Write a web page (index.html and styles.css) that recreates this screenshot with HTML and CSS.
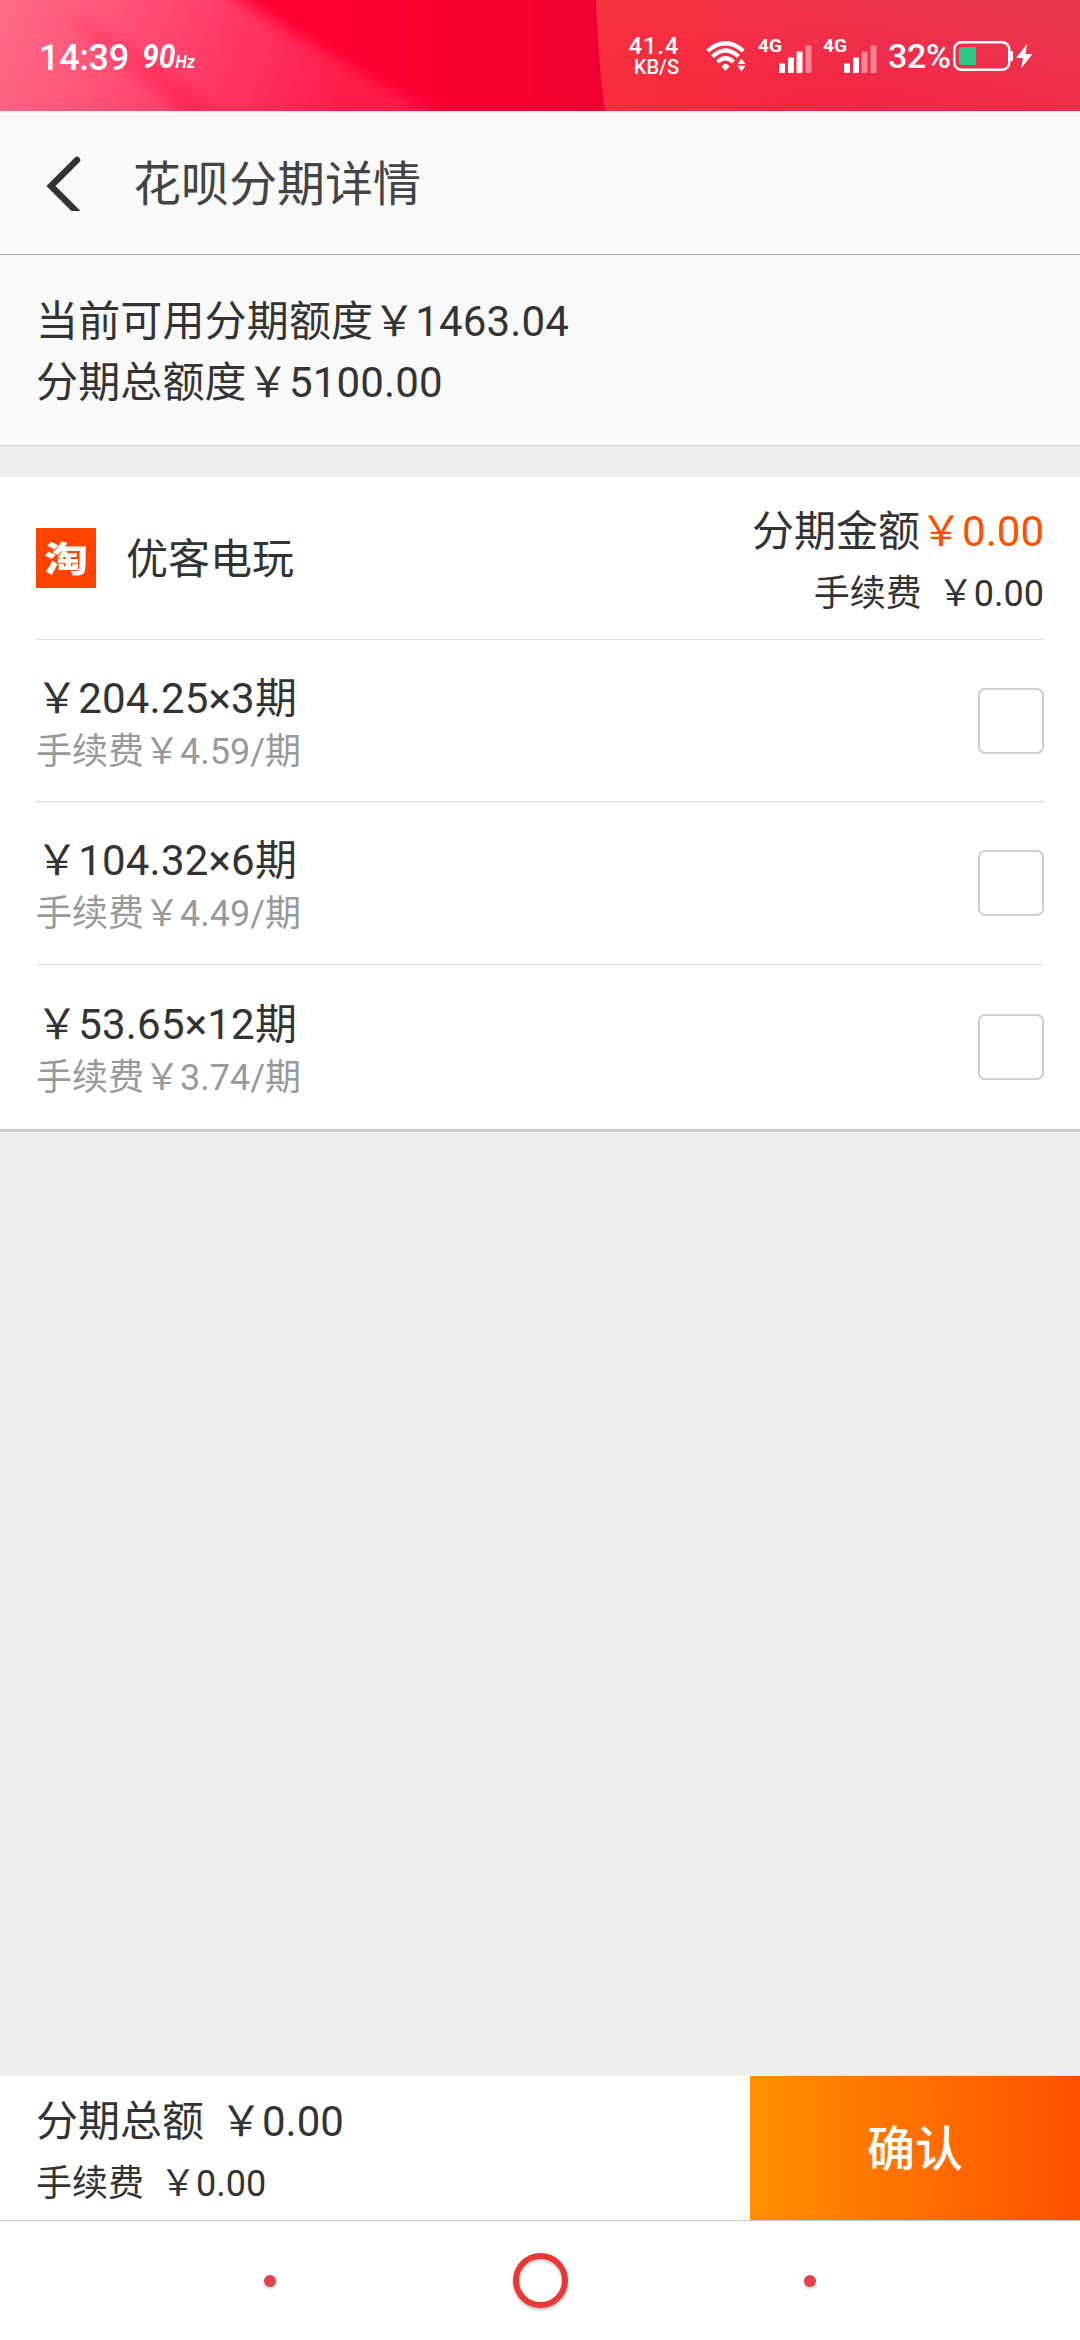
FILE: index.html
```html
<!DOCTYPE html>
<html lang="zh-CN">
    <head>
        <meta charset="UTF-8">
        <meta name="viewport" content="width=device-width, initial-scale=1.0">
        <title>花呗分期详情</title>
        <link rel="stylesheet" href="styles.css">
    </head>
    <body>
        <div class="status-bar">
            <svg class="status-bg" viewBox="0 0 1080 111" preserveAspectRatio="none">
                <defs>
                    <linearGradient id="red" x1="0" x2="1" y1="0" y2="0">
                        <stop offset="0.3" stop-color="#ff0033"/>
                        <stop offset="0.55" stop-color="#f00030"/>
                    </linearGradient>
                    <linearGradient id="pink" gradientUnits="userSpaceOnUse" x1="0" y1="0" x2="350" y2="130">
                        <stop offset="0" stop-color="#ff6c88"/>
                        <stop offset="0.3" stop-color="#ff5478"/>
                        <stop offset="0.65" stop-color="#ff3560"/>
                        <stop offset="1" stop-color="#ff1a48"/>
                    </linearGradient>
                    <linearGradient id="panel" gradientUnits="userSpaceOnUse" x1="900" y1="-30" x2="860" y2="130">
                        <stop offset="0" stop-color="#ea3850"/>
                        <stop offset="1" stop-color="#f42143"/>
                    </linearGradient>
                    <linearGradient id="shine" x1="0" x2="1" y1="0" y2="0">
                        <stop offset="0" stop-color="#ff4030" stop-opacity="0.4"/>
                        <stop offset="0.6" stop-color="#ff4030" stop-opacity="0"/>
                    </linearGradient>
                    <filter id="soft" x="-20%" y="-50%" width="140%" height="200%">
                        <feGaussianBlur stdDeviation="8"/>
                    </filter>
                </defs>
                <rect width="1080" height="111" fill="url(#red)"/>
                <path d="M-60-60H150L240 0 320 50 425 111 500 170H-60Z" fill="url(#pink)" filter="url(#soft)"/>
                <path d="M60 14Q130 45 222 116H190Q130 60 60 14Z" fill="#ff0f42" opacity="0.55" filter="url(#soft)"/>
                <path d="M596 0Q598 60 605 111H1080V0Z" fill="url(#panel)"/>
                <path d="M596 0Q598 60 605 111H1080V0Z" fill="url(#shine)"/>
            </svg>
            <span class="time">14:39</span>
            <span class="rate">90<small>Hz</small></span>
            <div class="speed">
                <span class="speed-num">41.4</span>
                <span class="speed-unit">KB/S</span>
            </div>
            <svg class="wifi" width="40" height="32" viewBox="0 0 40 32">
                <g fill="none" stroke="#fff" stroke-width="4.2">
                    <path d="M1.7 11Q19.5-4.6 37.3 11"/>
                    <path d="M6.5 16.5Q19.5 4.5 32.5 16.5"/>
                    <path d="M11.5 22Q19.5 14.5 27.5 22"/>
                </g>
                <path d="M19.5 31L15.5 26.5Q19.5 21 23.5 26.5Z" fill="#fff"/>
                <path d="M31.5 24L35.5 18.5 39.5 24ZM31.5 25.7H39.5L35.5 31.5Z" fill="#fff"/>
            </svg>
            <div class="signal">
                <span>4G</span>
                <svg width="33" height="28" viewBox="0 0 33 28" fill="#fff">
                    <rect x="0" y="18.500" width="6" height="9.500" rx="1"/>
                    <rect x="9" y="12.500" width="6" height="15.500" rx="1"/>
                    <rect x="17.500" y="6.500" width="6" height="21.500" rx="1"/>
                    <rect x="26.500" y="0.500" width="6" height="27.500" rx="1" opacity="0.42"/>
                </svg>
            </div>
            <div class="signal">
                <span>4G</span>
                <svg width="33" height="28" viewBox="0 0 33 28" fill="#fff">
                    <rect x="0" y="18.500" width="6" height="9.500" rx="1"/>
                    <rect x="9" y="12.500" width="6" height="15.500" rx="1"/>
                    <rect x="17.500" y="6.500" width="6" height="21.500" rx="1" opacity="0.42"/>
                    <rect x="26.500" y="0.500" width="6" height="27.500" rx="1" opacity="0.42"/>
                </svg>
            </div>
            <span class="percent">32%</span>
            <svg class="battery" width="80" height="30" viewBox="0 0 80 30">
                <rect x="1.250" y="1.250" width="55" height="27.500" rx="7" fill="none" stroke="#fff" stroke-width="2.500"/>
                <path d="M57 10H58.500Q60 10 60 11.500V18.500Q60 20 58.500 20H57Z" fill="#fff"/>
                <path d="M9 6H23V24H9Q6 24 6 21V9Q6 6 9 6Z" fill="#2bc786"/>
                <path d="M74 3L63 17H70L68 27.500 79.500 13H72.500Z" fill="#fff"/>
            </svg>
        </div>

        <div class="header">
            <svg class="back" width="36" height="56" viewBox="0 0 36 56">
                <path d="M31 5L5 31 31 57" fill="none" stroke="#333" stroke-width="6.500" stroke-linecap="round"/>
            </svg>
            <h1>花呗分期详情</h1>
        </div>

        <div class="quota">
            <p>当前可用分期额度￥1463.04</p>
            <p>分期总额度￥5100.00</p>
        </div>

        <div class="card">
            <div class="shop">
                <div class="logo"><span>淘</span></div>
                <div class="shop-name">优客电玩</div>
                <div class="shop-total">
                    <p class="big">分期金额<span class="price">￥0.00</span></p>
                    <p class="small">手续费<span class="value">￥0.00</span></p>
                </div>
            </div>
            <label class="plan">
                <div>
                    <p class="big">￥204.25×3期</p>
                    <p class="small">手续费￥4.59/期</p>
                </div>
                <input type="checkbox" name="plan">
            </label>
            <label class="plan">
                <div>
                    <p class="big">￥104.32×6期</p>
                    <p class="small">手续费￥4.49/期</p>
                </div>
                <input type="checkbox" name="plan">
            </label>
            <label class="plan">
                <div>
                    <p class="big">￥53.65×12期</p>
                    <p class="small">手续费￥3.74/期</p>
                </div>
                <input type="checkbox" name="plan">
            </label>
        </div>

        <div class="footer">
            <div class="footer-total">
                <p class="big">分期总额<span class="value">￥0.00</span></p>
                <p class="small">手续费<span class="value">￥0.00</span></p>
            </div>
            <button type="button" class="confirm">确认</button>
        </div>

        <div class="nav-bar">
            <i class="dot"></i>
            <i class="ring"></i>
            <i class="dot"></i>
        </div>
    </body>
</html>
```
FILE: styles.css
```css
* {
    box-sizing: border-box;
}

body {
    font-family: Roboto, "Noto Sans CJK SC", sans-serif;
    background-color: #eee;
    color: #333;
    margin: 0;
    height: 2340px;
    display: flex;
    flex-direction: column;
}

p, h1 {
    margin: 0;
    font-weight: 400;
    white-space: nowrap;
}

.big {
    font-size: 42px;
}

.small {
    font-size: 36px;
}

.value {
    margin-left: 16px;
}

/* status bar */
.status-bar {
    position: relative;
    height: 111px;
    flex: none;
    display: flex;
    align-items: flex-start;
    color: #fff;
    font-weight: 500;
    padding-left: 39px;
}

.status-bar > * {
    position: relative;
    flex: none;
}

.status-bar .status-bg {
    position: absolute;
    left: 0;
    top: 0;
    width: 100%;
    height: 100%;
}

.time {
    font-size: 36px;
    line-height: 40px;
    letter-spacing: -0.3px;
    margin-top: 38px;
    width: 103px;
}

.rate {
    font-size: 34px;
    line-height: 40px;
    font-weight: 700;
    font-style: italic;
    margin-top: 36px;
    width: 485px;
    transform: scaleX(0.88);
    transform-origin: left;
}

.rate small {
    font-size: 19px;
}

.speed {
    width: 52px;
    margin-top: 34px;
    display: flex;
    flex-direction: column;
    align-items: flex-end;
}

.speed-num {
    font-size: 24px;
    line-height: 24px;
    letter-spacing: 0.7px;
}

.speed-unit {
    font-size: 20px;
    line-height: 18px;
}

.wifi {
    margin: 40px 0 0 27px;
}

.signal {
    display: flex;
    width: 65px;
    margin-top: 36px;
}

.wifi + .signal {
    margin-left: 12px;
}

.signal span {
    font-size: 19px;
    line-height: 20px;
    font-weight: 700;
    width: 21px;
}

.signal svg {
    margin-top: 9px;
    flex: none;
}

.percent {
    font-size: 34px;
    line-height: 40px;
    letter-spacing: -0.3px;
    margin-top: 36px;
    width: 65px;
}

.battery {
    margin-top: 41px;
}

/* title */
.header {
    height: 144px;
    flex: none;
    display: flex;
    align-items: flex-start;
    background-color: #fafafa;
    border-bottom: 1px solid #aaa;
    padding-left: 46px;
}

.back {
    margin-top: 44px;
}

h1 {
    font-size: 48px;
    line-height: 60px;
    color: #444;
    margin: 44px 0 0 51px;
}

.quota {
    height: 191px;
    flex: none;
    background-color: #f9f9f9;
    border-bottom: 1px solid #d5d5d5;
    padding: 36px;
    font-size: 42px;
    line-height: 61px;
    letter-spacing: 0.15px;
}

/* shop and plans */
.card {
    flex: none;
    margin-top: 31px;
    padding: 0 36px;
    background-color: #fff;
    border-bottom: 3px solid #ccc;
}

.shop {
    height: 162px;
    display: flex;
    align-items: center;
}

.logo {
    width: 60px;
    height: 60px;
    background-color: #ff4400;
    color: #fff;
    font-family: "Noto Sans CJK SC", sans-serif;
    font-size: 44px;
    font-weight: 900;
    line-height: 58px;
    text-align: center;
}

.logo span {
    display: block;
    transform: scaleY(0.8);
}

.shop-name {
    font-size: 42px;
    margin-left: 30px;
    padding-bottom: 5px;
    flex: 1;
}

.shop-total {
    text-align: right;
    line-height: 62px;
    padding-top: 10px;
}

.price {
    color: #ff5000;
}

.plan {
    height: 163px;
    display: flex;
    align-items: center;
    justify-content: space-between;
    border-top: 1px solid #ddd;
}

.shop + .plan {
    height: 162px;
}

.plan:last-child {
    height: 165px;
}

.plan div {
    padding-top: 10px;
}

.plan .big {
    line-height: 52px;
    letter-spacing: 0.2px;
}

.plan .small {
    line-height: 54px;
    color: #999;
}

.plan input {
    appearance: none;
    width: 66px;
    height: 66px;
    margin: 0;
    border: 2px solid #ccced2;
    border-radius: 7px;
    background-color: #fff;
}

/* bottom */
.footer {
    height: 144px;
    flex: none;
    margin-top: auto;
    display: flex;
    justify-content: space-between;
    background-color: #fff;
}

.footer-total {
    padding: 15px 36px 0;
    line-height: 62px;
}

.confirm {
    width: 330px;
    border: none;
    padding: 0 0 6px;
    background: linear-gradient(to right, #ff9000, #ff5000);
    color: #fff;
    font-family: inherit;
    font-size: 48px;
    font-weight: 500;
}

.nav-bar {
    height: 120px;
    flex: none;
    display: flex;
    align-items: center;
    justify-content: space-between;
    padding: 0 264px;
    background-color: #fff;
    border-top: 1px solid #ccc;
}

.dot {
    width: 12px;
    height: 12px;
    border-radius: 50%;
    background-color: #e0444a;
    box-shadow: 0 2px 3px rgba(0, 0, 0, 0.2);
}

.ring {
    width: 55px;
    height: 55px;
    border: 6px solid #e93636;
    border-radius: 50%;
    box-shadow: 0 2px 3px rgba(0, 0, 0, 0.25), inset 0 2px 3px rgba(0, 0, 0, 0.2);
}
```
